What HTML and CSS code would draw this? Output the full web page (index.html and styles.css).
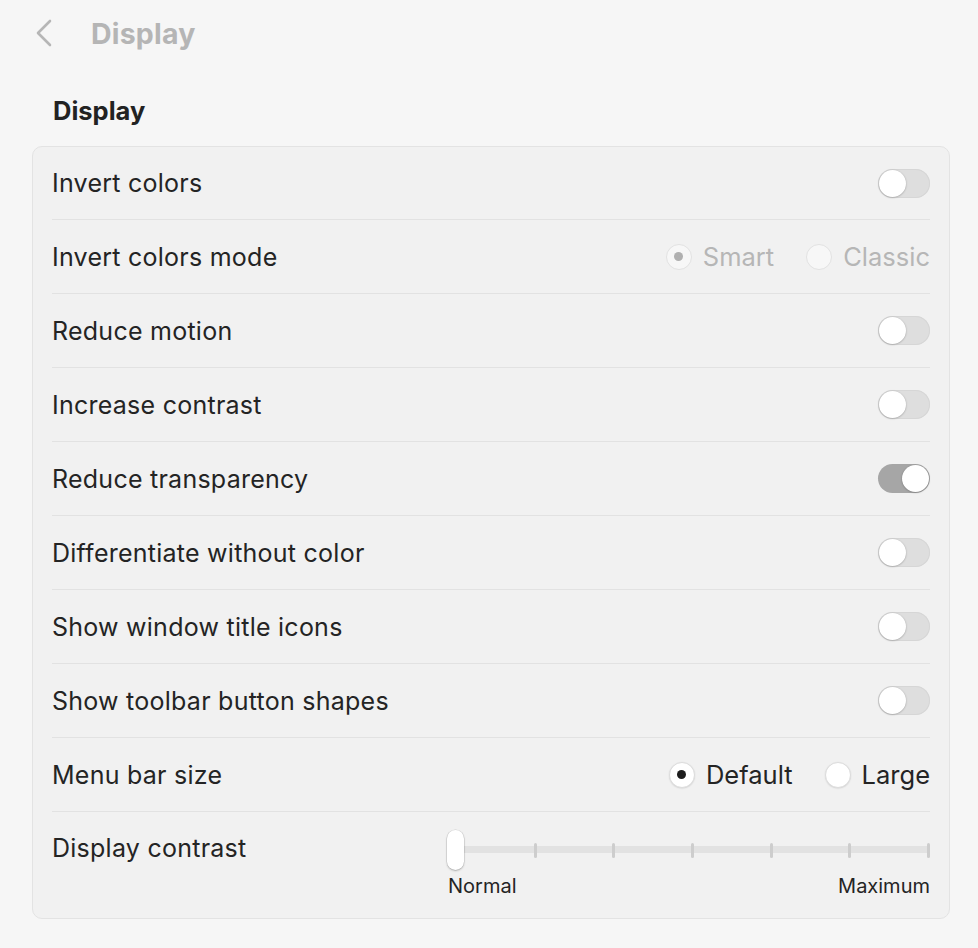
FILE: index.html
```html
<!DOCTYPE html>
<html>
<head>
<meta charset="utf-8">
<link rel="stylesheet" href="styles.css">
</head>
<body>
<header class="topbar">
  <svg class="back" width="20" height="30" viewBox="0 0 20 30"><polyline points="16,3 4,15 16,27" fill="none" stroke="#b6b6b6" stroke-width="2.6" stroke-linecap="round" stroke-linejoin="round"/></svg>
  <h1 class="title">Display</h1>
</header>
<h2 class="section">Display</h2>
<div class="card">
  <div class="row first"><span class="label">Invert colors</span><span class="toggle"></span></div>
  <div class="row"><span class="label">Invert colors mode</span>
    <div class="radios disabled">
      <span class="radio"><span class="dot checked"></span>Smart</span>
      <span class="radio"><span class="dot"></span>Classic</span>
    </div>
  </div>
  <div class="row"><span class="label">Reduce motion</span><span class="toggle"></span></div>
  <div class="row"><span class="label">Increase contrast</span><span class="toggle"></span></div>
  <div class="row"><span class="label">Reduce transparency</span><span class="toggle on"></span></div>
  <div class="row"><span class="label">Differentiate without color</span><span class="toggle"></span></div>
  <div class="row"><span class="label">Show window title icons</span><span class="toggle"></span></div>
  <div class="row"><span class="label">Show toolbar button shapes</span><span class="toggle"></span></div>
  <div class="row"><span class="label">Menu bar size</span>
    <div class="radios">
      <span class="radio"><span class="dot checked"></span>Default</span>
      <span class="radio"><span class="dot"></span>Large</span>
    </div>
  </div>
  <div class="row last"><span class="label">Display contrast</span>
    <div class="slider">
      <div class="track">
        <span class="tick"></span><span class="tick"></span><span class="tick"></span><span class="tick"></span><span class="tick"></span><span class="tick"></span><span class="tick"></span>
        <span class="knob"></span>
      </div>
      <div class="ends"><span>Normal</span><span>Maximum</span></div>
    </div>
  </div>
</div>
</body>
</html>
```
FILE: styles.css
```css
html, body {
  margin: 0;
  padding: 0;
  background: #f6f6f6;
  font-family: Inter, "Noto Sans", "Liberation Sans", sans-serif;
  color: #242424;
}
.topbar {
  display: flex;
  align-items: center;
  height: 66px;
  padding-left: 34px;
}
.back { display: block; margin-right: 37px; }
.title {
  margin: 0;
  font-size: 28.5px;
  font-weight: 700;
  color: #b5b5b5;
  letter-spacing: 0.2px;
}
.section {
  margin: 0;
  padding: 27px 0 17px 53px;
  font-size: 25.5px;
  font-weight: 700;
  line-height: 36px;
  color: #222;
}
.card {
  margin: 0 28px 0 32px;
  background: #f1f1f1;
  border: 1px solid #e3e3e3;
  border-radius: 10px;
  padding: 0 19px;
}
.row {
  display: flex;
  align-items: center;
  justify-content: space-between;
  height: 73px;
  border-bottom: 1px solid #e2e2e2;
}
.row.first { height: 72px; }
.label {
  font-size: 25px;
  letter-spacing: 0.25px;
}
.toggle {
  position: relative;
  width: 52px;
  height: 29px;
  border-radius: 15px;
  background: #dedede;
  box-shadow: inset 0 0 0 1px #d6d6d6;
}
.toggle::after {
  content: "";
  position: absolute;
  left: 1px;
  top: 1px;
  width: 27px;
  height: 27px;
  border-radius: 50%;
  background: #fff;
  box-shadow: 0 0.5px 2px rgba(0,0,0,0.3);
}
.toggle.on { background: #a6a6a6; box-shadow: none; }
.toggle.on::after { left: 24px; }
.radios {
  display: flex;
  gap: 32px;
}
.radio {
  display: flex;
  align-items: center;
  gap: 11px;
  font-size: 25.5px;
}
.dot {
  position: relative;
  width: 26px;
  height: 26px;
  border-radius: 50%;
  background: #fff;
  border: 1px solid #dcdcdc;
  box-sizing: border-box;
  box-shadow: 0 0.5px 1.5px rgba(0,0,0,0.12);
}
.dot.checked::after {
  content: "";
  position: absolute;
  left: 7.5px;
  top: 7.5px;
  width: 9px;
  height: 9px;
  border-radius: 50%;
  background: #1d1d1d;
}
.radios.disabled .radio { color: #b6b6b6; }
.radios.disabled .dot { background: #f7f7f7; border-color: #e2e2e2; box-shadow: none; }
.radios.disabled .dot.checked::after { background: #b0b0b0; }
.row.last {
  height: 106px;
  border-bottom: none;
  align-items: flex-start;
}
.row.last .label { line-height: 73px; }
.slider {
  width: 483px;
  padding-top: 18px;
}
.track {
  position: relative;
  height: 40px;
  display: flex;
  align-items: center;
  justify-content: space-between;
  padding: 0 0 0 8px;
}
.track::before {
  content: "";
  position: absolute;
  left: 8px;
  right: 0;
  top: 16px;
  height: 7px;
  background: #e2e2e2;
  border-radius: 3px;
}
.tick {
  position: relative;
  width: 3px;
  height: 15px;
  border-radius: 1.5px;
  background: #cdcdcd;
}
.knob {
  position: absolute;
  left: 0;
  top: 0;
  width: 17px;
  height: 40px;
  border-radius: 9px;
  background: #fff;
  box-shadow: 0 0 0 0.5px rgba(0,0,0,0.12), 0 1px 2px rgba(0,0,0,0.25);
}
.ends {
  display: flex;
  justify-content: space-between;
  font-size: 20px;
  margin-top: 4px;
  padding-left: 1px;
}
```
